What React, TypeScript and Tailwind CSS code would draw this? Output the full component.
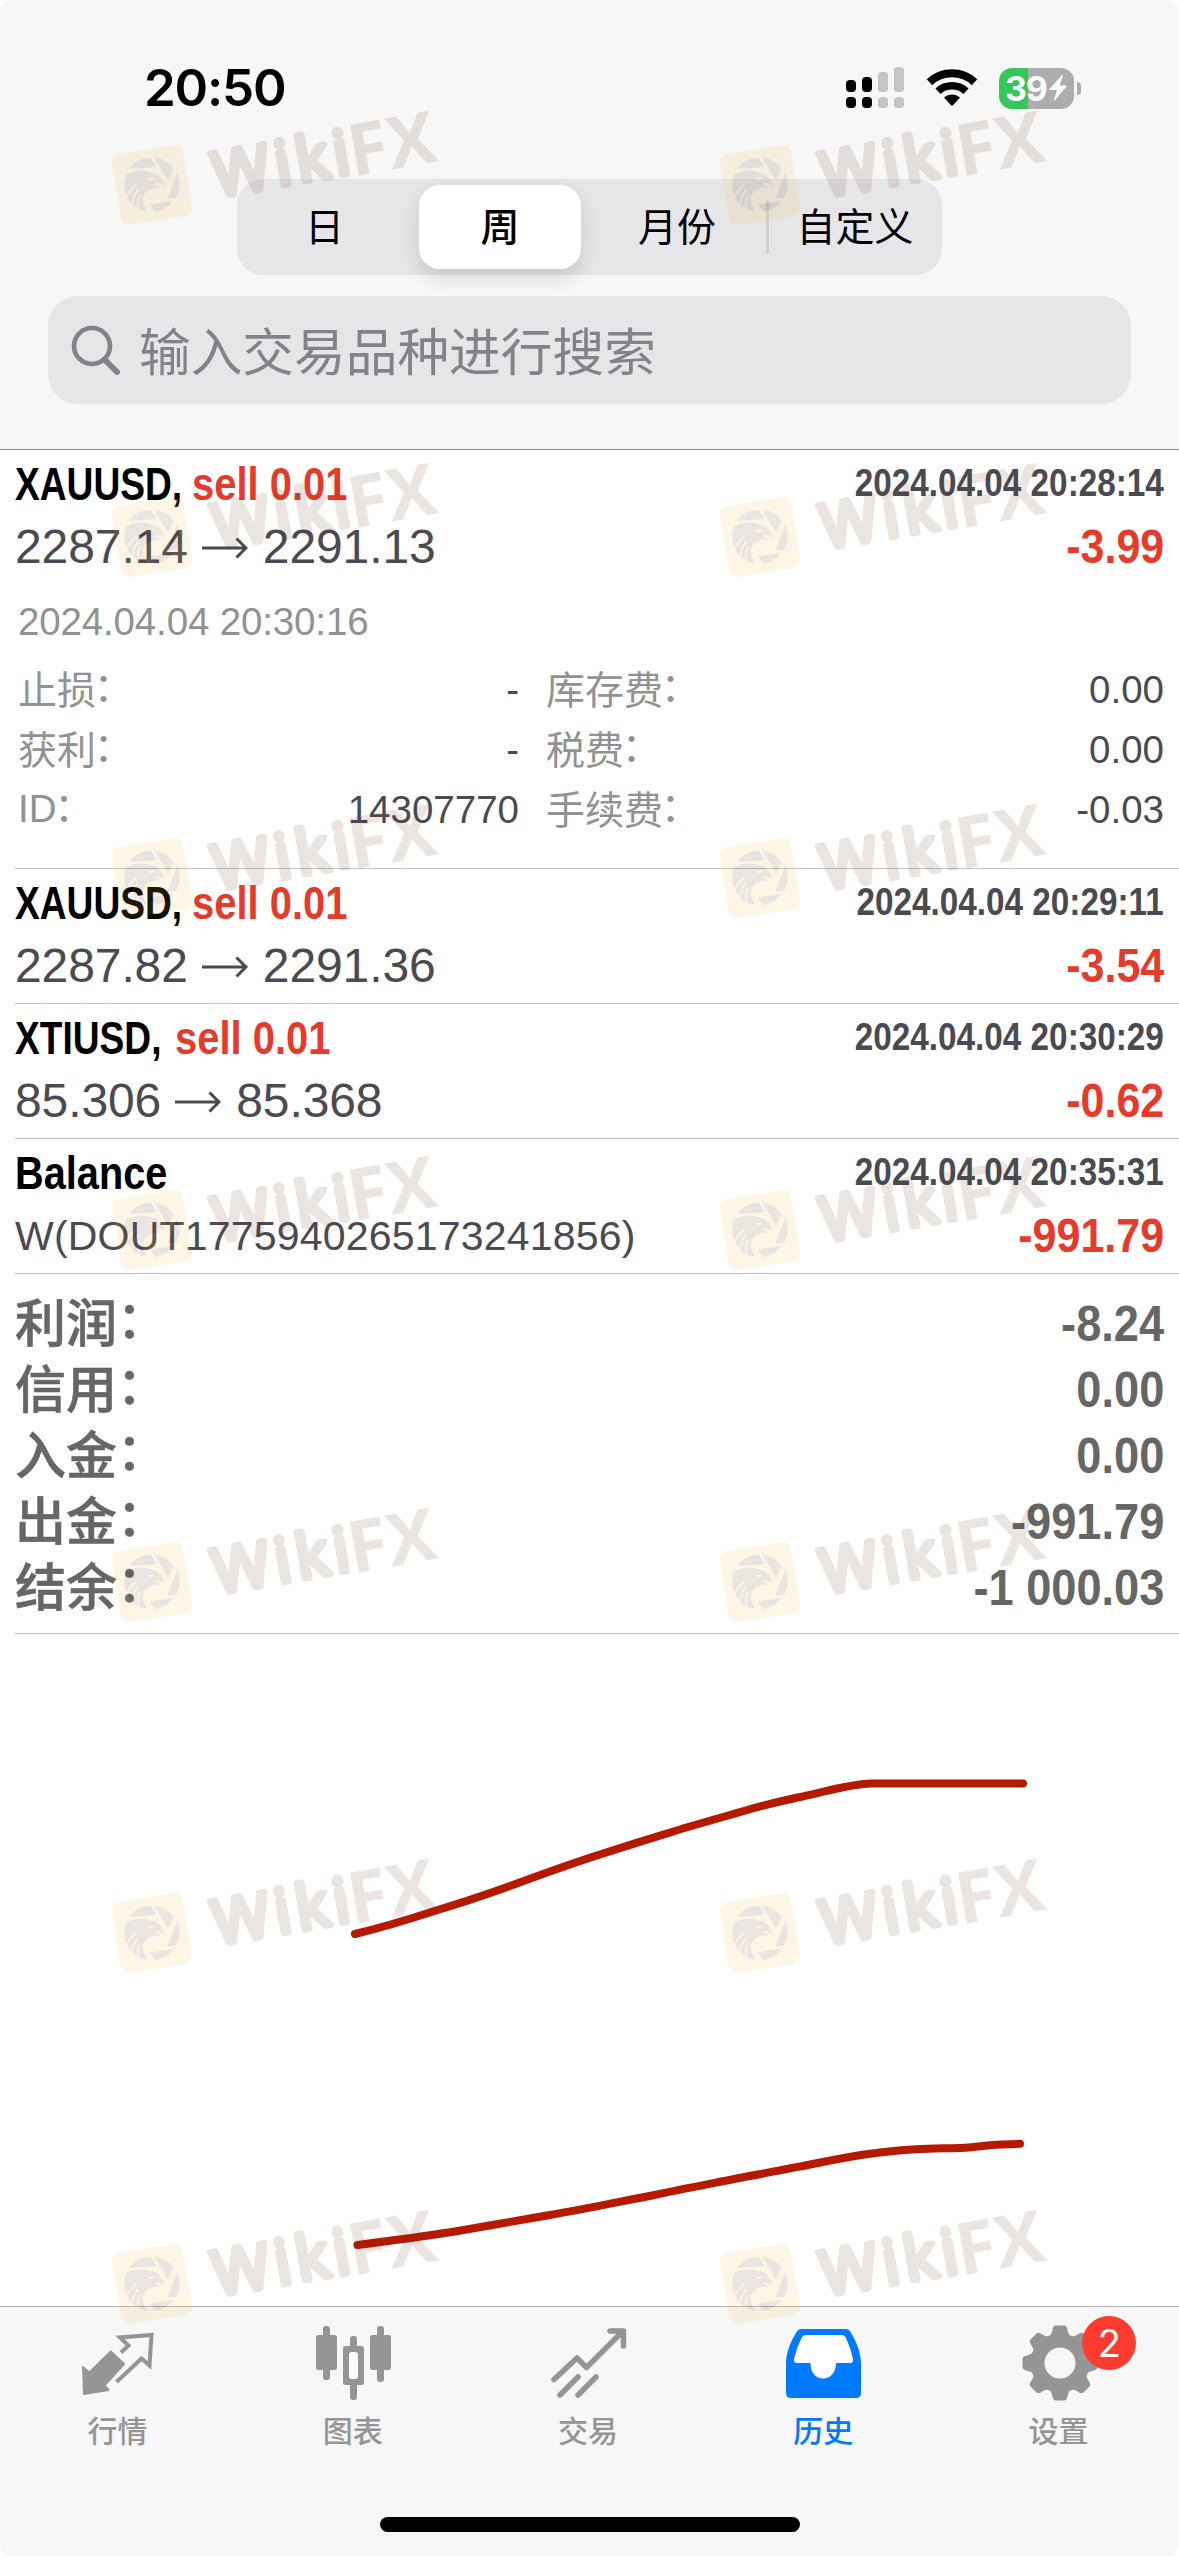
import type { ReactNode } from "react";

type Deal = {
  symbol: string;
  symbolClass: string;
  side?: string;
  time: string;
  from?: string;
  to?: string;
  note?: string;
  profit: string;
  details?: boolean;
};

const deals: Deal[] = [
  {
    symbol: "XAUUSD,",
    symbolClass: "w-[177px]",
    side: "sell 0.01",
    time: "2024.04.04 20:28:14",
    from: "2287.14",
    to: "2291.13",
    profit: "-3.99",
    details: true,
  },
  {
    symbol: "XAUUSD,",
    symbolClass: "w-[177px]",
    side: "sell 0.01",
    time: "2024.04.04 20:29:11",
    from: "2287.82",
    to: "2291.36",
    profit: "-3.54",
  },
  {
    symbol: "XTIUSD,",
    symbolClass: "w-[160px]",
    side: "sell 0.01",
    time: "2024.04.04 20:30:29",
    from: "85.306",
    to: "85.368",
    profit: "-0.62",
  },
  {
    symbol: "Balance",
    symbolClass: "w-[160px]",
    time: "2024.04.04 20:35:31",
    note: "W(DOUT1775940265173241856)",
    profit: "-991.79",
  },
];

const summary = [
  { label: "利润", value: "-8.24" },
  { label: "信用", value: "0.00" },
  { label: "入金", value: "0.00" },
  { label: "出金", value: "-991.79" },
  { label: "结余", value: "-1 000.03" },
];

const watermarkRows = [184.5, 536.5, 877.5, 1229.5, 1581.5, 1933, 2284];
const watermarkColumns = [152, 760];

export default function App() {
  return (
    <div className="relative flex h-[2556px] w-[1179px] flex-col overflow-hidden bg-white font-['Liberation_Sans','Noto_Sans_CJK_SC',sans-serif]">
      <Header />
      <main className="flex flex-1 flex-col">
        <div className="pl-[15px]">
          {deals.map((deal) => (
            <DealRow key={deal.time} deal={deal} />
          ))}
          <Summary />
        </div>
        <BalanceChart />
      </main>
      <TabBar />
      {watermarkRows.map((y) =>
        watermarkColumns.map((x) => <Watermark key={`${x}-${y}`} x={x} y={y} />),
      )}
    </div>
  );
}

function Header() {
  return (
    <header className="h-[450px] rounded-t-[12px] border-b border-[#8e8e90] bg-[#f7f7f7]">
      <div className="flex h-[179px] items-start justify-between pt-[66px] pr-[98px] pl-[144px]">
        <span className="font-['Inter',sans-serif] text-[51px] leading-[44px] font-semibold tracking-[-1.2px] text-black">
          20:50
        </span>
        <div className="flex">
          <SignalIcon />
          <WifiIcon />
          <Battery />
        </div>
      </div>
      <div className="mx-auto flex h-[96px] w-[705px] items-center rounded-[26px] bg-[#e6e6e9] pr-[1px] font-['Noto_Sans_CJK_SC',sans-serif] text-[39px] leading-[79px] text-black">
        <span className="h-[84px] w-[175px] text-center">日</span>
        <span className="mx-[7px] h-[84px] w-[162px] rounded-[21px] bg-white text-center font-medium shadow-[0_8px_20px_rgba(0,0,0,0.14)]">
          周
        </span>
        <span className="h-[84px] w-[178px] text-center">月份</span>
        <span className="h-[54px] w-[3px] rounded-full bg-[#cfcfd2]" />
        <span className="h-[84px] flex-1 text-center">自定义</span>
      </div>
      <div className="mx-[48px] mt-[21px] flex h-[108px] items-center rounded-[30px] bg-[#e6e6e9] pl-[23px] text-[#838288]">
        <svg className="h-[53px] w-[52px]" viewBox="0 0 52 53" fill="none" stroke="currentColor">
          <circle cx="21" cy="22" r="18" strokeWidth="4.6" />
          <path d="M34 36 L46 48" strokeWidth="6" strokeLinecap="round" />
        </svg>
        <span className="ml-[16px] h-[102px] font-['Noto_Sans_CJK_SC',sans-serif] text-[51.7px] leading-[99px]">
          输入交易品种进行搜索
        </span>
      </div>
    </header>
  );
}

function SignalIcon() {
  return (
    <svg className="mt-px h-[42px] w-[58px]" viewBox="0 0 58 42">
      <rect x="0" y="13" width="10" height="12" rx="4" />
      <rect x="16" y="10" width="10" height="15" rx="4" />
      <g fill="#c5c5c5">
        <rect x="32" y="5" width="10" height="20" rx="3.5" />
        <rect x="48" y="0" width="10" height="25" rx="3.5" />
        <rect x="32" y="30" width="10" height="11" rx="3.5" />
        <rect x="48" y="30" width="10" height="11" rx="3.5" />
      </g>
      <rect x="0" y="30" width="10" height="11" rx="4" />
      <rect x="16" y="30" width="10" height="11" rx="4" />
    </svg>
  );
}

function WifiIcon() {
  return (
    <svg className="mt-[2px] ml-[22px] h-[40px] w-[52px]" viewBox="0 0 52 40">
      <g fill="none" stroke="black">
        <path d="M3.5 14.2 A33 33 0 0 1 48.5 14.2" strokeWidth="8" />
        <path d="M12 23.2 A20.7 20.7 0 0 1 40 23.2" strokeWidth="7.6" />
      </g>
      <path d="M18 29.5 A12 12 0 0 1 34 29.5 L27.2 37 Q26 38.2 24.8 37 Z" />
    </svg>
  );
}

function Battery() {
  return (
    <div className="ml-[21px] flex items-center pt-px">
      <div className="flex h-[41px] w-[75px] items-center rounded-[13px] bg-[linear-gradient(90deg,#35c759_39%,#adadad_39%)] pl-[6px]">
        <span className="font-['Inter',sans-serif] text-[34px] leading-[41px] font-bold tracking-[-1.2px] text-white">
          39
        </span>
        <svg className="ml-[2px] h-[26px] w-[18px]" viewBox="0 0 18 26" fill="white">
          <path d="M12.5 0.5 L0.5 14 Q0 15 1 15 H8 L5 25 Q5 26 6 25 L17.5 11.5 Q18 10.5 17 10.5 H10.5 L14 0.5 Q14 -0.5 12.5 0.5 Z" />
        </svg>
      </div>
      <span className="ml-[3px] h-[13px] w-[4px] rounded-r-full bg-[#adadad]" />
    </div>
  );
}

function DealRow({ deal }: { deal: Deal }) {
  return (
    <section className="border-b border-[#c2c2c4] pr-[15px] text-[#4b4a51]">
      <div className="flex h-[68px] items-start justify-between whitespace-nowrap">
        <div className="flex text-[47px] leading-[68px] font-bold">
          <span className={deal.symbolClass}>
            <span
              className={
                deal.side
                  ? "inline-block origin-left scale-x-[0.79] text-black"
                  : "inline-block origin-left scale-x-[0.845] text-black"
              }
            >
              {deal.symbol}
            </span>
          </span>
          {deal.side && (
            <span className="inline-block origin-left scale-x-[0.85] text-[#e63b2a]">
              {deal.side}
            </span>
          )}
        </div>
        <span className="origin-right scale-x-[0.876] text-[38px] leading-[67px] font-bold">
          {deal.time}
        </span>
      </div>
      <div className="flex h-[57px] items-start justify-between whitespace-nowrap">
        {deal.note ? (
          <span className="text-[41px] leading-[59px] tracking-[0.2px]">{deal.note}</span>
        ) : (
          <div className="flex items-center text-[48px] leading-[57px] tracking-[-0.1px]">
            {deal.from}
            <svg
              className="mt-[3px] mr-[15px] ml-[14px] h-[22px] w-[46px]"
              viewBox="0 0 46 22"
              fill="none"
              stroke="currentColor"
              strokeWidth="3"
            >
              <path d="M0 11 H44 M34.5 1.5 L44 11 L34.5 20.5" />
            </svg>
            {deal.to}
          </div>
        )}
        <span className="origin-right scale-x-[0.905] text-[47.5px] leading-[57px] font-bold text-[#e63b2a]">
          {deal.profit}
        </span>
      </div>
      {deal.details ? <DealDetails /> : <div className="h-[9px]" />}
    </section>
  );
}

function DealDetails() {
  return (
    <div className="h-[293px] pt-6 pl-[3px] text-[38.5px]">
      <div className="leading-[45px] tracking-[-0.15px] text-[#929292]">
        2024.04.04 20:30:16
      </div>
      <div className="mt-[15px] grid grid-cols-[501px_1fr] gap-x-[27px]">
        <Detail label="止损" value="-" />
        <Detail label="库存费" value="0.00" />
        <Detail label="获利" value="-" />
        <Detail label="税费" value="0.00" />
        <Detail label="ID" value="14307770" />
        <Detail label="手续费" value="-0.03" />
      </div>
    </div>
  );
}

function Detail({ label, value }: { label: string; value: string }) {
  const latin = label === "ID";

  return (
    <div className="flex h-[60px] items-start justify-between">
      <span
        className={
          latin
            ? "flex leading-[60px] text-[#929292]"
            : "flex font-['Noto_Sans_CJK_SC',sans-serif] text-[39px] leading-[56px] text-[#929292]"
        }
      >
        {label}
        <Colon className="-ml-[12px] text-[39px] leading-[54px]" />
      </span>
      <span className="leading-[61px]">{value}</span>
    </div>
  );
}

function Colon({ className }: { className: string }) {
  return (
    <span className={`font-['Noto_Sans_CJK_JP',sans-serif] ${className}`}>：</span>
  );
}

function Summary() {
  return (
    <section className="h-[360px] border-b border-[#c2c2c4] pt-[13px] pr-[15px] text-[#666666]">
      {summary.map((item) => (
        <div key={item.label} className="flex h-[66px] items-start justify-between">
          <span className="flex font-['Noto_Sans_CJK_SC',sans-serif] text-[51px] leading-[66px] font-medium [-webkit-text-stroke:0.6px_#666666]">
            {item.label}
            <Colon className="-ml-[13px] leading-[65px]" />
          </span>
          <span className="origin-right scale-x-[0.895] text-[50.5px] leading-[73px] font-bold">
            {item.value}
          </span>
        </div>
      ))}
    </section>
  );
}

function BalanceChart() {
  return (
    <svg
      className="h-[672px] w-full"
      viewBox="0 1634 1179 672"
      fill="none"
      stroke="#b51a00"
      strokeWidth="8"
      strokeLinecap="round"
      strokeLinejoin="round"
    >
      <path d="M355 1934 C384 1927 410 1919 436 1910.5 C461 1903 485 1895 510 1886 C537 1876 565 1866 592 1857 C620 1848 647 1839.5 675 1831 C697 1824 720 1818 742 1811.5 C761 1806 781 1801 800 1797 C814 1794 827 1790.5 840 1788 C852 1785.5 860 1783.5 872 1783.4 H1023" />
      <path d="M357.5 2245 C389 2241 420 2237 452 2232 C485 2226 517 2221 550 2215 C584 2209 618 2202 652 2195.5 C682 2189 712 2183.5 742 2177.5 C767 2173 792 2168 818 2163 C837 2159 856 2155.5 876 2153 C889 2151 902 2150 916 2149.2 C932 2148 949 2148.5 965 2147.7 C976 2147 985 2145.5 996 2144.8 L1020 2143.8" />
    </svg>
  );
}

function TabBar() {
  return (
    <nav className="h-[250px] rounded-b-[10px] border-t border-[#b3b3b3] bg-[#f7f7f7] text-[#959595]">
      <div className="flex h-[210px] w-[1176px]">
        <Tab label="行情">
          <svg className="h-[80px] w-[78px]" viewBox="0 0 78 80">
            <path
              d="M4 45 L10.4 50.5 L31.8 29.5 L45 42 L25.5 63.5 L29.5 68 L5 72 Z"
              fill="currentColor"
              stroke="currentColor"
              strokeWidth="2"
              strokeLinejoin="round"
            />
            <path
              d="M37.5 60 L62.5 36.5 L70.5 43.5 L72.5 13 L41 15.5 L49.5 23.5 L42 30.5"
              fill="none"
              stroke="currentColor"
              strokeWidth="4"
            />
          </svg>
        </Tab>
        <Tab label="图表">
          <svg className="h-[80px] w-[80px]" viewBox="0 0 80 80" fill="currentColor">
            <rect x="10" y="4" width="7" height="54" rx="3" />
            <rect x="3" y="13" width="21" height="35" rx="2.5" />
            <rect x="37" y="14" width="7" height="64" rx="3" />
            <rect x="30" y="24" width="21" height="39" rx="2.5" />
            <rect x="36" y="30" width="9" height="27" rx="3" fill="white" />
            <rect x="64" y="4" width="7" height="56" rx="3" />
            <rect x="57" y="13" width="21" height="35" rx="2.5" />
          </svg>
        </Tab>
        <Tab label="交易">
          <svg
            className="h-[80px] w-[80px]"
            viewBox="0 0 80 80"
            fill="none"
            stroke="currentColor"
            strokeWidth="5.5"
            strokeLinecap="round"
            strokeLinejoin="round"
          >
            <path d="M6 57.5 L29 36 L38.5 45.5 L75 9 M62 9 H75.5 V24 M12 73 L30 55 M30 73 L48 55" />
          </svg>
        </Tab>
        <Tab label="历史" active>
          <svg className="h-[80px] w-[75px]" viewBox="0 -7 75 80">
            <path
              d="M16 0 H60 Q63 0 64.5 3 C71 14 75 24 75 35 V64 Q75 69 70 69 H5 Q0 69 0 64 V35 C0 24 4 14 10.5 3 Q12 0 16 0 Z"
              fill="currentColor"
            />
            <path
              d="M19.5 6 H56 Q58.5 6 60 9 Q65 20 67 30 Q67.5 34 64.5 34 H50 C50 44 44 49.5 37 49.5 C30 49.5 24.5 44 24.5 34 H11 Q7.5 34 8 30 Q10.5 19 15.5 9 Q17 6 19.5 6 Z"
              fill="white"
            />
          </svg>
        </Tab>
        <Tab label="设置" badge="2">
          <svg className="h-[80px] w-[80px]" viewBox="-42 -41 80 80">
            <circle r="22.5" fill="none" stroke="currentColor" strokeWidth="14" />
            {[0, 45, 90, 135, 180, 225, 270, 315].map((angle) => (
              <path
                key={angle}
                transform={`rotate(${angle})`}
                d="M-12 -26 C-6 -29 -9 -37.5 -4 -37.5 H4 C9 -37.5 6 -29 12 -26 Z"
                fill="currentColor"
              />
            ))}
          </svg>
        </Tab>
      </div>
      <div className="mx-auto h-[15px] w-[420px] rounded-full bg-black" />
    </nav>
  );
}

function Tab({
  active,
  badge,
  children,
  label,
}: {
  active?: boolean;
  badge?: string;
  children: ReactNode;
  label: string;
}) {
  return (
    <div
      className={
        active
          ? "flex flex-1 flex-col items-center pt-[15px] text-[#007aff]"
          : "flex flex-1 flex-col items-center pt-[15px]"
      }
    >
      <div className="relative">
        {children}
        {badge && (
          <span className="absolute top-[-6px] left-[64px] flex size-[54px] items-center justify-center rounded-full bg-[#ff3b30] font-['Inter',sans-serif] text-[38px] leading-none text-white">
            {badge}
          </span>
        )}
      </div>
      <span className="mt-[9px] font-['Noto_Sans_CJK_SC',sans-serif] text-[30px] leading-[36px] font-medium">
        {label}
      </span>
    </div>
  );
}

function Watermark({ x, y }: { x: number; y: number }) {
  return (
    <svg
      className="pointer-events-none absolute h-[200px] w-[370px] overflow-visible"
      style={{ left: x - 45, top: y - 130 }}
      viewBox="-45 -130 370 200"
    >
      <g opacity="0.12">
        <rect
          x="-36"
          y="-36"
          width="72"
          height="72"
          rx="9"
          transform="rotate(-9)"
          fill="#f0be2f"
        />
        <g fill="#612f1e">
          <path d="M-23 -16 A27.3 27.3 0 0 1 -1 -27.3 L4.5 -18 Z" />
          <path d="M2.5 -27.2 A27.3 27.3 0 0 1 21.5 -16.5 L16 -4 Z" />
          <path d="M25 -12 A27.3 27.3 0 0 1 24.5 12.5 L15.5 13.5 Z" />
          <path d="M-2 19.5 L21.5 15.5 A27.3 27.3 0 0 1 3 27 Z" />
          <path d="M-25.5 -11 C-18 -14 -8 -15.5 0 -12.5 C5 -12 12 -6 12.5 1.5 C9 -1.5 6 -2 2.5 -1.5 C3 1 6 0 8.5 2.5 C0 2 -8 5 -9 13 C-9.5 18 -7 24 -4.5 27 A27.3 27.3 0 0 1 -25.5 -11 Z" />
        </g>
        <path
          d="M-4 -6.5 Q0 -5 2 -7.5 M-26 13 Q-21 3 -16 0 M-20 20 Q-19 11 -14 5 M-13 25 Q-16 17 -12 10"
          fill="none"
          stroke="#f0be2f"
          strokeWidth="1.5"
        />
        <g
          transform="rotate(-9.9)"
          fill="#612f1e"
          fontFamily="'Open Sans', sans-serif"
          fontWeight="700"
        >
          <text
            x="61.5"
            y="23"
            fontSize="62"
            fontWeight="400"
            textLength="138"
            lengthAdjust="spacing"
            stroke="#612f1e"
            strokeWidth="6"
            strokeLinejoin="round"
          >
            Wiki
          </text>
          <text
            x="199"
            y="26"
            fontSize="72"
            textLength="88"
            lengthAdjust="spacingAndGlyphs"
          >
            FX
          </text>
        </g>
      </g>
    </svg>
  );
}
